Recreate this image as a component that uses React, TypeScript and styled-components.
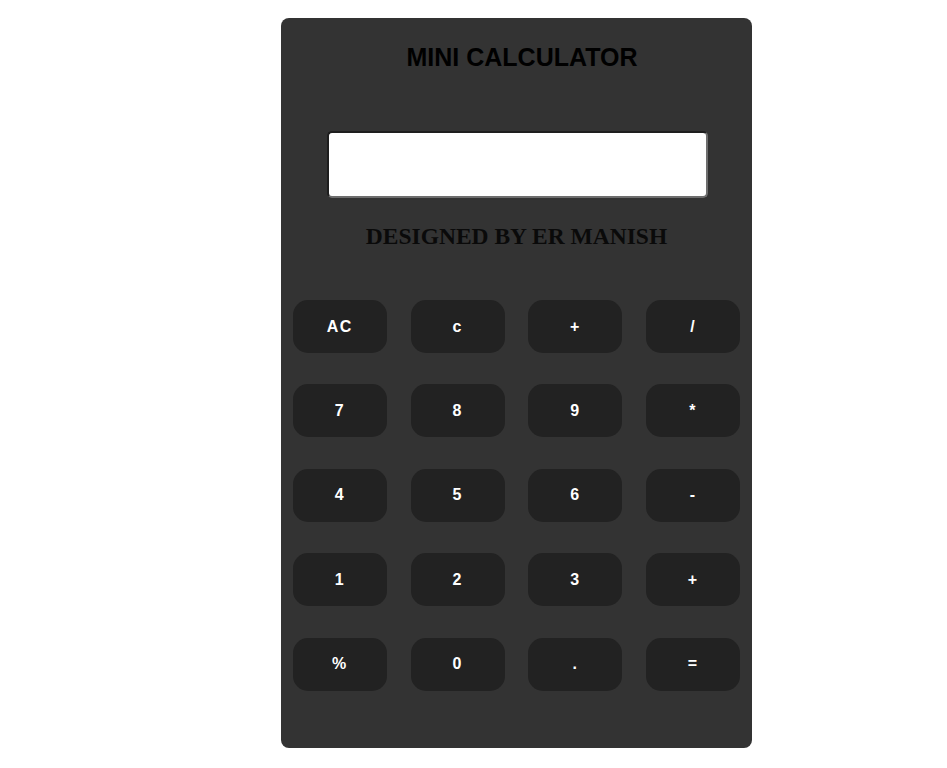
import React from "react";
import styled, { createGlobalStyle } from "styled-components";

const GlobalStyle = createGlobalStyle`
  html, body {
    margin: 0;
    padding: 0;
    background: #ffffff;
  }
  body {
    font-family: "Liberation Sans", Arial, sans-serif;
  }
`;

const Page = styled.div`
  display: flex;
  padding: 18px 0 20px 281px;
`;

const Card = styled.div`
  width: 471px;
  height: 730px;
  box-sizing: border-box;
  background: #333333;
  border-radius: 8px;
  display: flex;
  flex-direction: column;
  align-items: center;
  padding-top: 25px;
`;

const Title = styled.h1`
  margin: 0 0 0 11px;
  font-family: "Liberation Sans", Arial, sans-serif;
  font-size: 25px;
  line-height: 28px;
  font-weight: 700;
  color: #000000;
  text-align: center;
`;

const Display = styled.input`
  margin-top: 60px;
  width: 381px;
  height: 67px;
  box-sizing: border-box;
  margin-left: 2px;
  background: #ffffff;
  border-style: solid;
  border-width: 2px;
  border-color: #1e1e1e #6e6e6e #6e6e6e #1e1e1e;
  border-radius: 5px;
  font-family: "Liberation Sans", Arial, sans-serif;
  font-size: 24px;
  padding: 0 10px;
  outline: none;
`;

const Credit = styled.h2`
  margin: 25px 0 0 0;
  font-family: "Liberation Serif", "Times New Roman", serif;
  font-size: 23.5px;
  line-height: 26px;
  font-weight: 700;
  color: #0a0a0a;
  text-align: center;
`;

const Keypad = styled.div`
  margin-top: 51px;
  width: 100%;
  display: grid;
  grid-template-columns: repeat(4, 94px);
  justify-content: space-around;
  row-gap: 31.4px;
`;

const Key = styled.button`
  width: 94px;
  height: 53px;
  border: none;
  border-radius: 15px;
  background: #222222;
  color: #ffffff;
  font-family: "Liberation Sans", Arial, sans-serif;
  font-size: 16px;
  font-weight: 700;
  letter-spacing: 1.5px;
  padding: 0;
  cursor: pointer;
`;

const keys = [
  "AC", "c", "+", "/",
  "7", "8", "9", "*",
  "4", "5", "6", "-",
  "1", "2", "3", "+",
  "%", "0", ".", "=",
];

export default function App() {
  return (
    <>
      <GlobalStyle />
      <Page>
        <Card>
          <Title>MINI CALCULATOR</Title>
          <Display type="text" readOnly />
          <Credit>DESIGNED BY ER MANISH</Credit>
          <Keypad>
            {keys.map((k, i) => (
              <Key key={i}>{k}</Key>
            ))}
          </Keypad>
        </Card>
      </Page>
    </>
  );
}
